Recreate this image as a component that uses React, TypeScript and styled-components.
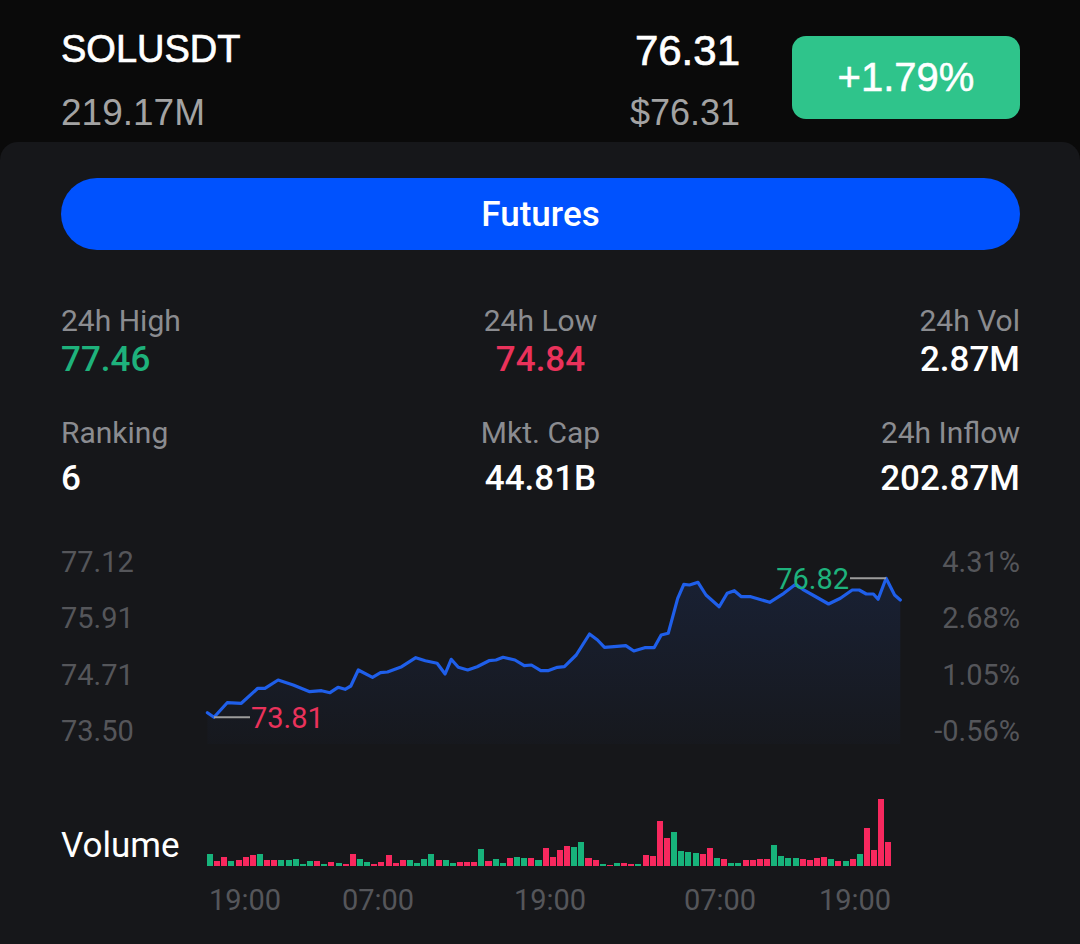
import styled, { createGlobalStyle } from 'styled-components';

const GlobalStyle = createGlobalStyle`
  html, body {
    margin: 0;
    padding: 0;
    background: #0a0a0a;
  }
  body {
    font-family: Roboto, "Noto Sans", Arial, sans-serif;
    -webkit-font-smoothing: antialiased;
  }
`;

const GREEN = '#1eb27c';
const RED = '#ea325b';
const BAR_GREEN = '#17b37b';
const BAR_RED = '#f7285e';

// price line, already in plot coordinates (695 x 205)
const pricePoints: [number, number][] = [
  [0.4, 168.7], [7, 173.3], [20.2, 158.7], [34.3, 159.3], [50.8, 144.3], [57.9, 144.3],
  [71.1, 136], [86.2, 141], [102.7, 147.7], [114.5, 146.7], [123, 148.7], [131, 143.3],
  [138.1, 145.3], [143.8, 142], [151.3, 126], [165.5, 133.3], [173.5, 128.7], [180.5, 128],
  [194.7, 122.7], [208.8, 113.7], [218.3, 116.7], [230.1, 119.3], [238.1, 130], [244.2, 115.3],
  [251.3, 123.3], [260.7, 126], [270.2, 122.7], [282, 116.7], [289, 116], [296.1, 113.3],
  [307.9, 116], [317.3, 121.7], [324.4, 121], [333.8, 126.7], [340.9, 126.7], [350.4, 123.3],
  [357.4, 122.7], [369.2, 111], [382.5, 90], [390.5, 96], [397.5, 103.3], [407, 102.7],
  [418.8, 101.7], [426.8, 107], [437.7, 103.7], [447.1, 103.7], [454.2, 91], [461.2, 89.3],
  [470.7, 54.3], [476.8, 40.3], [482.5, 41], [491, 38.3], [499, 51], [512.2, 62.7],
  [520.2, 49.3], [527.3, 46.7], [534.4, 52.7], [543.8, 52.7], [562.7, 58.3], [576.8, 49.3],
  [588.6, 40.3], [595.7, 45.3], [607.5, 52], [621.6, 60], [633.4, 54.3], [645.2, 46],
  [652.2, 46], [659.3, 50], [666.4, 50], [671.1, 55.3], [679.1, 34.3], [687.6, 51],
  [693.3, 56],
];

// volume bars: height in px, g = up candle, r = down candle
const volumeHeights = [
  11.7, 5, 9, 5, 5.7, 9, 11, 12.3, 6, 6, 6, 6, 7, 1.7, 5, 5, 2.3, 4, 3.3, 2.3,
  11.7, 7.3, 4, 2.3, 4.3, 10.7, 3.3, 5.7, 6.3, 2.7, 7, 12.3, 5.7, 5.7, 3.3, 4.3, 4.3, 4.3, 16.7, 5,
  7.3, 3.3, 8.3, 9, 7.7, 7.7, 6, 18, 9, 16, 20, 19.3, 24.3, 8.3, 6, 2.3, 1.2, 3, 2.7, 2.3,
  1.7, 11, 10, 45, 28.3, 34.3, 15, 14.3, 12.7, 11.7, 17.7, 7.7, 7, 3.3, 2.7, 6.3, 5.7, 7.3, 6.7, 20.7,
  10, 8, 8, 7, 6.3, 8.3, 9, 6.7, 5, 5, 6.7, 11.7, 38.3, 15.7, 66.7, 24.3,
];
const volumeSides =
  'grrgrrrgrrggggg' + 'rgrgrrggrrrrrggggrggrrrgrggrggrgrrrrggrrgrgrr' + 'grrrrggggrrgrggrrrrggggrrrrgrgrgrr';

const timeTicks = [
  { label: '19:00', x: 38 },
  { label: '07:00', x: 171 },
  { label: '19:00', x: 343 },
  { label: '07:00', x: 513 },
  { label: '19:00', x: 648 },
];

const linePath = pricePoints.map(([x, y], i) => `${i ? 'L' : 'M'}${x} ${y}`).join(' ');
const areaPath = `${linePath} L693.3 200 L0.4 200 Z`;

const App: React.FC = () => {
  return (
    <Page>
      <GlobalStyle />
      <Header>
        <Ticker>
          <Symbol>SOLUSDT</Symbol>
          <Turnover>219.17M</Turnover>
        </Ticker>
        <PriceBlock>
          <LastPrice>76.31</LastPrice>
          <UsdPrice>$76.31</UsdPrice>
        </PriceBlock>
        <ChangeBadge>+1.79%</ChangeBadge>
      </Header>

      <Card>
        <FuturesButton type="button">Futures</FuturesButton>

        <StatsGrid>
          <Stat $align="start">
            <StatLabel>24h High</StatLabel>
            <StatValue $tone={GREEN}>77.46</StatValue>
          </Stat>
          <Stat $align="center">
            <StatLabel>24h Low</StatLabel>
            <StatValue $tone={RED}>74.84</StatValue>
          </Stat>
          <Stat $align="end">
            <StatLabel>24h Vol</StatLabel>
            <StatValue>2.87M</StatValue>
          </Stat>
          <Stat $align="start">
            <StatLabel>Ranking</StatLabel>
            <StatValue $gap={7}>6</StatValue>
          </Stat>
          <Stat $align="center">
            <StatLabel>Mkt. Cap</StatLabel>
            <StatValue $gap={7}>44.81B</StatValue>
          </Stat>
          <Stat $align="end">
            <StatLabel>24h Inflow</StatLabel>
            <StatValue $gap={7}>202.87M</StatValue>
          </Stat>
        </StatsGrid>

        <ChartRow>
          <AxisColumn $align="flex-start">
            <AxisLabel>77.12</AxisLabel>
            <AxisLabel>75.91</AxisLabel>
            <AxisLabel>74.71</AxisLabel>
            <AxisLabel>73.50</AxisLabel>
          </AxisColumn>
          <PlotSvg viewBox="0 0 695 205" width={695} height={205}>
            <defs>
              <linearGradient id="priceFill" x1="0" y1="0" x2="0" y2="1">
                <stop offset="0%" stopColor="#2a5bd0" stopOpacity={0.14} />
                <stop offset="100%" stopColor="#2a5bd0" stopOpacity={0.02} />
              </linearGradient>
            </defs>
            <path d={areaPath} fill="url(#priceFill)" />
            <path d={linePath} fill="none" stroke="#1f5fea" strokeWidth={3.2} strokeLinejoin="round" strokeLinecap="round" />
            <line x1={7} y1={173.3} x2={43} y2={173.3} stroke="#9c9c9c" strokeWidth={2} />
            <MarkerText x={44} y={183.5} fill={RED}>73.81</MarkerText>
            <line x1={643} y1={34.3} x2={679} y2={34.3} stroke="#9c9c9c" strokeWidth={2} />
            <MarkerText x={642} y={44.5} fill={GREEN} textAnchor="end">76.82</MarkerText>
          </PlotSvg>
          <AxisColumn $align="flex-end">
            <AxisLabel>4.31%</AxisLabel>
            <AxisLabel>2.68%</AxisLabel>
            <AxisLabel>1.05%</AxisLabel>
            <AxisLabel>-0.56%</AxisLabel>
          </AxisColumn>
        </ChartRow>

        <VolumeRow>
          <VolumeLabel>Volume</VolumeLabel>
          <BarTrack>
            {volumeHeights.map((h, i) => (
              <Bar key={i} $up={volumeSides[i] === 'g'} style={{ height: `${h}px` }} />
            ))}
          </BarTrack>
        </VolumeRow>

        <TimeAxis>
          {timeTicks.map((t, i) => (
            <TimeTick key={i} style={{ left: `${t.x}px` }}>
              {t.label}
            </TimeTick>
          ))}
        </TimeAxis>
      </Card>
    </Page>
  );
};

const Page = styled.div`
  width: 1080px;
  height: 944px;
  overflow: hidden;
  background: #0a0a0a;
  display: flex;
  flex-direction: column;
`;

const Header = styled.header`
  height: 142px;
  flex-shrink: 0;
  padding: 0 60px 0 61px;
  display: flex;
  align-items: flex-start;
  font-family: 'Liberation Sans', Arial, sans-serif;
`;

const Ticker = styled.div`
  flex: 1;
  padding-top: 27px;
  display: flex;
  flex-direction: column;
`;

/* the header figures use a medium cut; a thin stroke thickens the regular face */
const Symbol = styled.h1`
  margin: 0;
  color: #ffffff;
  font-size: 38px;
  font-weight: 400;
  line-height: 44px;
  -webkit-text-stroke: 0.7px #ffffff;
`;

const Turnover = styled.div`
  margin-top: 20px;
  color: #a3a3a3;
  font-size: 37px;
  line-height: 44px;
`;

const PriceBlock = styled.div`
  padding-top: 27px;
  display: flex;
  flex-direction: column;
  align-items: flex-end;
`;

const LastPrice = styled.div`
  color: #ffffff;
  font-size: 42px;
  font-weight: 400;
  line-height: 48px;
  -webkit-text-stroke: 0.7px #ffffff;
`;

const UsdPrice = styled.div`
  margin-top: 16px;
  color: #a3a3a3;
  font-size: 36px;
  line-height: 44px;
`;

const ChangeBadge = styled.div`
  width: 228px;
  height: 83px;
  margin: 36px 0 0 52px;
  border-radius: 14px;
  background: #2fc48b;
  color: #ffffff;
  font-size: 40px;
  -webkit-text-stroke: 0.5px #ffffff;
  display: flex;
  align-items: center;
  justify-content: center;
`;

const Card = styled.section`
  flex: 1;
  background: #16171a;
  border-radius: 18px 18px 0 0;
  padding: 36px 60px 0 61px;
  display: flex;
  flex-direction: column;
`;

const FuturesButton = styled.button`
  height: 72px;
  border: none;
  border-radius: 36px;
  background: #0052fe;
  color: #ffffff;
  font-family: Roboto, sans-serif;
  font-size: 35px;
  font-weight: 500;
  cursor: pointer;
`;

const StatsGrid = styled.div`
  margin-top: 53px;
  display: grid;
  grid-template-columns: repeat(3, 1fr);
  row-gap: 34px;
`;

const Stat = styled.div<{ $align: 'start' | 'center' | 'end' }>`
  display: flex;
  flex-direction: column;
  align-items: ${({ $align }) => ($align === 'start' ? 'flex-start' : $align === 'end' ? 'flex-end' : 'center')};
`;

const StatLabel = styled.span`
  color: #8b8c90;
  font-size: 30px;
  line-height: 36px;
`;

const StatValue = styled.span<{ $tone?: string; $gap?: number }>`
  margin-top: ${({ $gap }) => $gap ?? 0}px;
  color: ${({ $tone }) => $tone ?? '#ffffff'};
  font-size: 35px;
  font-weight: 500;
  line-height: 42px;
`;

const ChartRow = styled.div`
  margin-top: 44px;
  height: 205px;
  display: grid;
  grid-template-columns: 146px 695px 1fr;
`;

const AxisColumn = styled.div<{ $align: string }>`
  display: flex;
  flex-direction: column;
  justify-content: space-between;
  align-items: ${({ $align }) => $align};
`;

const AxisLabel = styled.span`
  color: #55565a;
  font-size: 29px;
  line-height: 36px;
`;

const PlotSvg = styled.svg`
  display: block;
  overflow: visible;
`;

const MarkerText = styled.text`
  font-family: Roboto, sans-serif;
  font-size: 29px;
`;

const VolumeRow = styled.div`
  margin-top: 41px;
  display: grid;
  grid-template-columns: 146px 1fr;
  align-items: end;
`;

const VolumeLabel = styled.span`
  margin-bottom: -1px;
  color: #ffffff;
  font-size: 35px;
  line-height: 42px;
`;

const BarTrack = styled.div`
  width: 684px;
  height: 76px;
  display: flex;
  align-items: flex-end;
  gap: 1.1px;
`;

const Bar = styled.div<{ $up: boolean }>`
  flex: 1;
  background: ${({ $up }) => ($up ? BAR_GREEN : BAR_RED)};
`;

const TimeAxis = styled.div`
  position: relative;
  margin: 16px 0 0 146px;
  height: 36px;
`;

const TimeTick = styled.span`
  position: absolute;
  top: 0;
  transform: translateX(-50%);
  color: #55565a;
  font-size: 29px;
  line-height: 36px;
`;

export default App;
